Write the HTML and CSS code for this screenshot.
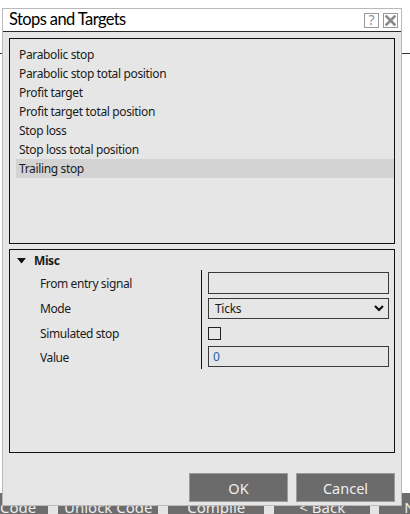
FILE: index.html
```html
<!DOCTYPE html>
<html>
<head>
<meta charset="utf-8">
<link rel="stylesheet" href="styles.css">
</head>
<body>
<div class="desktop">
  <div class="bg-line"></div>
  <div class="bg-buttons">
    <div class="bg-btn first">Code</div>
    <div class="bg-btn wide">Unlock Code</div>
    <div class="bg-btn">Compile</div>
    <div class="bg-btn">&lt; Back</div>
    <div class="bg-btn last">Next</div>
  </div>

  <div class="dialog">
    <div class="titlebar">
      <span class="title">Stops and Targets</span>
      <div class="title-btns">
        <span class="tbtn help">?</span>
        <span class="tbtn close">
          <svg width="11" height="11" viewBox="0 0 11 11"><path d="M1.5 1.5 L9.5 9.5 M9.5 1.5 L1.5 9.5" stroke="#8a8a8a" stroke-width="2.6" stroke-linecap="square"/></svg>
        </span>
      </div>
    </div>
    <div class="body">
      <div class="listbox">
        <div class="item">Parabolic stop</div>
        <div class="item">Parabolic stop total position</div>
        <div class="item">Profit target</div>
        <div class="item">Profit target total position</div>
        <div class="item">Stop loss</div>
        <div class="item">Stop loss total position</div>
        <div class="item selected">Trailing stop</div>
      </div>
      <div class="propbox">
        <div class="cat">
          <svg class="tri" width="9" height="6" viewBox="0 0 9 6"><path d="M0 0 H9 L4.5 5.5 Z" fill="#111"/></svg>
          <span>Misc</span>
        </div>
        <div class="grid">
          <div class="lbl r1">From entry signal</div>
          <div class="val r1"><div class="field"></div></div>
          <div class="lbl r2">Mode</div>
          <div class="val r2">
            <div class="field select">
              <span>Ticks</span>
              <svg width="10" height="7" viewBox="0 0 10 7"><path d="M1 1 L5 5 L9 1" stroke="#111" stroke-width="2.2" fill="none"/></svg>
            </div>
          </div>
          <div class="lbl r3">Simulated stop</div>
          <div class="val r3"><div class="check"></div></div>
          <div class="lbl r4">Value</div>
          <div class="val r4"><div class="field num">0</div></div>
        </div>
      </div>
      <div class="actions">
        <div class="btn">OK</div>
        <div class="btn">Cancel</div>
      </div>
    </div>
  </div>
</div>
</body>
</html>
```

FILE: styles.css
```css
* { box-sizing: border-box; }
html, body { margin: 0; padding: 0; }
body {
  width: 410px;
  height: 514px;
  overflow: hidden;
  background: #ffffff;
  font-family: "Noto Sans", "Open Sans", sans-serif;
  color: #1b1b1b;
}
.desktop {
  position: relative;
  width: 410px;
  height: 514px;
  overflow: hidden;
}
.bg-line {
  position: absolute;
  left: 0;
  right: 0;
  top: 53px;
  height: 1px;
  background: #333;
}
.bg-buttons {
  position: absolute;
  left: 0;
  top: 493px;
  width: 500px;
  height: 21px;
  background: #e4e4e4;
  display: flex;
  gap: 10px;
}
.bg-btn {
  flex: 0 0 96px;
  height: 26px;
  background: #6d6d6d;
  color: #ececec;
  font-size: 15px;
  display: flex;
  align-items: center;
  justify-content: center;
  padding-top: 1px;
  white-space: nowrap;
}
.bg-btn.wide { flex-basis: 100px; }
.bg-btn.first {
  flex-basis: 42px;
  justify-content: flex-end;
  padding-right: 12px;
}
.bg-btn.last {
  margin-left: -1px;
  justify-content: flex-start;
  padding-left: 25px;
}

.dialog {
  position: absolute;
  left: 2px;
  top: 8px;
  width: 400px;
  height: 498px;
  border: 1px solid #b9b9b9;
  background: #e6e6e6;
  display: flex;
  flex-direction: column;
}
.titlebar {
  height: 23px;
  background: #ffffff;
  border-bottom: 1px solid #2a2a2a;
  display: flex;
  align-items: center;
  justify-content: space-between;
  padding: 0 3px 0 6px;
}
.title {
  font-family: "Lato", "Noto Sans", sans-serif;
  font-size: 16.5px;
  letter-spacing: -0.6px;
  color: #000;
  line-height: 1;
  margin-top: -1px;
}
.title-btns {
  display: flex;
  gap: 4px;
}
.tbtn {
  width: 15px;
  height: 15px;
  border: 1px solid #9a9a9a;
  display: flex;
  align-items: center;
  justify-content: center;
  background: #fff;
}
.help {
  font-size: 14px;
  color: #8793ab;
  line-height: 1;
}
.body {
  flex: 1;
  padding: 6px 6px 0 6px;
  display: flex;
  flex-direction: column;
}
.listbox {
  height: 206px;
  border: 1px solid #111;
  padding: 6px 0 0 6px;
}
.item {
  height: 19px;
  line-height: 19px;
  font-size: 12px;
  letter-spacing: -0.35px;
  padding-left: 3px;
  white-space: nowrap;
}
.item.selected {
  background: #d3d3d3;
}
.propbox {
  height: 204px;
  margin-top: 5px;
  border: 1px solid #111;
  display: flex;
  flex-direction: column;
}
.cat {
  height: 20px;
  display: flex;
  align-items: center;
  padding-left: 7px;
  font-size: 12px;
  font-weight: bold;
  letter-spacing: -0.4px;
}
.cat .tri {
  margin-right: 8px;
  margin-top: 1px;
}
.grid {
  display: grid;
  grid-template-columns: 191px 1fr;
  grid-template-rows: 26px 25px 24px 24px;
}
.lbl {
  font-size: 12px;
  letter-spacing: -0.4px;
  padding-left: 30px;
  display: flex;
  align-items: center;
}
.val {
  border-left: 1px solid #111;
  padding: 0 5px 0 6px;
  display: flex;
  align-items: center;
}
.val.r1 { padding-top: 2px; align-items: flex-start; }
.val.r4 { align-items: flex-start; padding-top: 1px; }
.field {
  width: 100%;
  height: 21px;
  border: 1px solid #3a3a3a;
  font-size: 12px;
  letter-spacing: -0.3px;
  display: flex;
  align-items: center;
  padding: 0 4px;
}
.val.r1 .field { height: 22px; }
.field.select {
  justify-content: space-between;
  padding: 0 4px 0 6px;
}
.field.num {
  color: #1f5fa8;
}
.check {
  width: 13px;
  height: 13px;
  border: 1px solid #222;
}
.actions {
  margin-top: 20px;
  display: flex;
  justify-content: flex-end;
  gap: 8px;
}
.btn {
  width: 99px;
  height: 29px;
  background: #6b6b6b;
  border: 1px solid #9c9c9c;
  color: #eeeeee;
  font-size: 14.5px;
  display: flex;
  align-items: center;
  justify-content: center;
}
```
